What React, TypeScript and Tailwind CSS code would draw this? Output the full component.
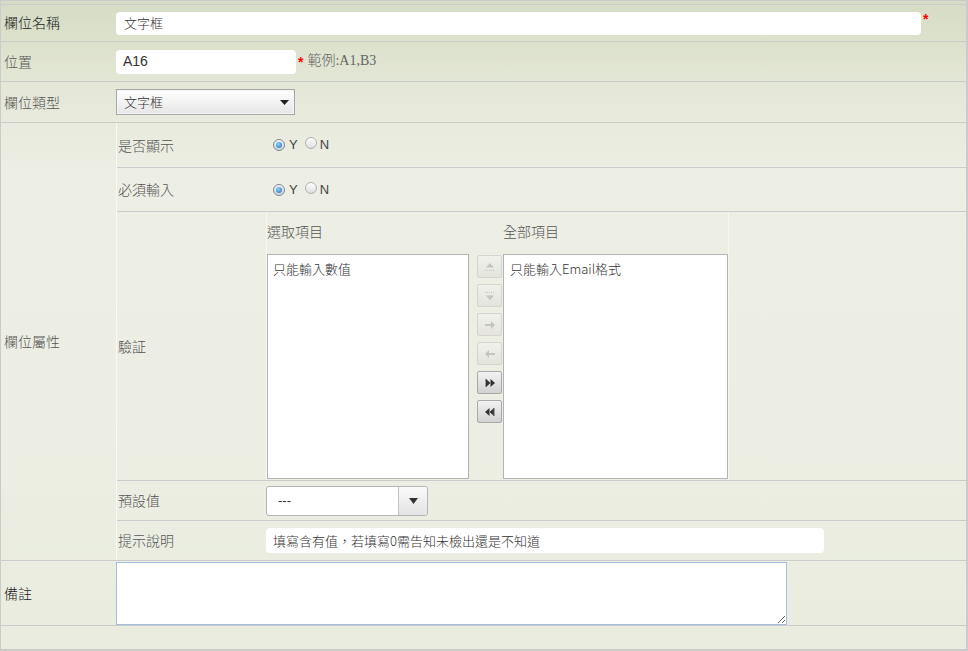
import type { ReactNode } from 'react'

const cjk = "font-['Noto_Sans_CJK_TC','Noto_Sans_CJK_SC',sans-serif]"

function Radio({ checked }: { checked?: boolean }) {
  return (
    <span
      className={
        'inline-flex h-[12px] w-[12px] items-center justify-center rounded-full border ' +
        (checked
          ? 'border-[#7d8a96] bg-[linear-gradient(#f4f4f4,#cfd3d6)]'
          : 'border-[#b0b0b0] bg-[linear-gradient(#ffffff,#dedede)]')
      }
    >
      {checked && (
        <span className="h-[6px] w-[6px] rounded-full bg-[radial-gradient(circle_at_40%_35%,#8fd0ff,#1b6fb8)]" />
      )}
    </span>
  )
}

function RadioYN() {
  return (
    <div className="ml-[7px] flex items-center font-['Liberation_Sans',sans-serif] text-[13px] text-[#444]">
      <Radio checked />
      <span className="ml-[4px]">Y</span>
      <span className="ml-[7px]">
        <Radio />
      </span>
      <span className="ml-[3px]">N</span>
    </div>
  )
}

function MoveBtn({ enabled, children }: { enabled?: boolean; children: ReactNode }) {
  return (
    <div
      className={
        'flex h-[23px] w-[25px] items-center justify-center rounded-[2px] border ' +
        (enabled
          ? 'border-[#a9a9a9] bg-[linear-gradient(#f2f2f2,#d2d2d2)]'
          : 'border-[#d6d6d0] bg-[linear-gradient(#f1f1ec,#e4e4dd)]')
      }
    >
      <svg width="14" height="12" viewBox="0 0 14 12">
        {children}
      </svg>
    </div>
  )
}

const faint = '#c4c4be'

function Transfer() {
  return (
    <div className="flex h-full w-[463px] flex-col border-l border-r border-[#f7f7f2]">
      <div className={'flex h-[42px] items-center pb-[4px] text-[14px] font-light text-[#555] ' + cjk}>
        <span className="w-[236px]">選取項目</span>
        <span>全部項目</span>
      </div>
      <div className="flex">
        <div className="h-[225px] w-[202px] border border-[#b3b3b3] bg-white px-[5px]">
          <span className={'text-[13px] font-light text-[#333] ' + cjk}>只能輸入數值</span>
        </div>
        <div className="flex w-[34px] flex-col gap-[6px] pl-[8px] pt-[1px]">
          <MoveBtn>
            <polygon points="3,6.5 7,2 11,6.5" fill={faint} />
            <line x1="2" y1="9.5" x2="12" y2="9.5" stroke={faint} strokeDasharray="1 1" />
          </MoveBtn>
          <MoveBtn>
            <line x1="2" y1="2.5" x2="12" y2="2.5" stroke={faint} strokeDasharray="1 1" />
            <polygon points="3,5.5 11,5.5 7,10" fill={faint} />
          </MoveBtn>
          <MoveBtn>
            <rect x="2" y="5" width="7" height="2" fill={faint} />
            <polygon points="8,2 12,6 8,10" fill={faint} />
          </MoveBtn>
          <MoveBtn>
            <rect x="5" y="5" width="7" height="2" fill={faint} />
            <polygon points="6,2 2,6 6,10" fill={faint} />
          </MoveBtn>
          <MoveBtn enabled>
            <rect x="2.5" y="2" width="1" height="8" fill="#555" />
            <polygon points="3,2 7.5,6 3,10" fill="#333" />
            <polygon points="7.5,2 12,6 7.5,10" fill="#333" />
          </MoveBtn>
          <MoveBtn enabled>
            <polygon points="6.5,2 2,6 6.5,10" fill="#333" />
            <polygon points="11,2 6.5,6 11,10" fill="#333" />
            <rect x="10.5" y="2" width="1" height="8" fill="#555" />
          </MoveBtn>
        </div>
        <div className="h-[225px] w-[225px] border border-[#b3b3b3] bg-white px-[6px]">
          <span className={'text-[13px] font-light text-[#333] ' + cjk}>只能輸入Email格式</span>
        </div>
      </div>
    </div>
  )
}

function SubRow({
  label,
  h,
  last,
  children,
}: {
  label: string
  h: string
  last?: boolean
  children?: ReactNode
}) {
  return (
    <div className={'flex ' + h + (last ? '' : ' border-b border-[#cbcbcb]')}>
      <div className={'flex w-[149px] items-center pl-[1px] text-[14px] font-light text-[#555] ' + cjk}>
        {label}
      </div>
      <div className="flex flex-1 items-center">{children}</div>
    </div>
  )
}

export default function App() {
  return (
    <div
      className={
        'flex h-[651px] w-[968px] flex-col border-t border-b-2 border-l border-r-2 border-[#cbcbcb] font-light ' +
        'bg-[linear-gradient(to_bottom,#d5dcc5_0px,#dde2cd_45px,#e6e9da_100px,#edeee4_170px,#eceee3_450px,#e9ecdf_100%)] ' +
        cjk
      }
    >
      <div className="h-[4px] shrink-0 border-b border-[#cbcbcb]" />

      {/* 欄位名稱 */}
      <div className="flex h-[37px] shrink-0 items-center border-b border-[#cbcbcb]">
        <div className="w-[115px] pb-[2px] pl-[3px] text-[14px] text-[#1a1a1a]">欄位名稱</div>
        <div className="flex h-[23px] w-[805px] items-center rounded-[4px] bg-white pl-[8px] text-[13px] text-[#333]">
          文字框
        </div>
        <span className="ml-[2px] self-start pt-[7px] font-['Liberation_Sans',sans-serif] text-[14px] font-bold leading-none text-[#f00]">
          *
        </span>
      </div>

      {/* 位置 */}
      <div className="flex h-[40px] shrink-0 items-center border-b border-[#cbcbcb]">
        <div className="w-[115px] pl-[3px] text-[14px] text-[#555]">位置</div>
        <div className="flex h-[24px] w-[180px] items-center rounded-[4px] bg-white pl-[7px] font-['Liberation_Sans',sans-serif] text-[14px] font-normal text-[#333]">
          A16
        </div>
        <span className="ml-[2px] self-start pt-[13px] font-['Liberation_Sans',sans-serif] text-[14px] font-bold leading-none text-[#f00]">
          *
        </span>
        <span className="ml-[4px] pb-[2px] font-['Liberation_Serif','Noto_Sans_CJK_TC',serif] text-[14px] text-[#666]">
          範例:A1,B3
        </span>
      </div>

      {/* 欄位類型 */}
      <div className="flex h-[41px] shrink-0 items-center border-b border-[#cbcbcb]">
        <div className="w-[115px] pl-[3px] text-[14px] text-[#555]">欄位類型</div>
        <div className="flex h-[26px] w-[179px] items-center justify-between border border-[#a7a7a7] bg-[linear-gradient(#ffffff,#e6e6e6)] pl-[7px] pr-[5px] text-[13px] text-[#333] shadow-[inset_0_0_0_1px_#f6f6f6]">
          文字框
          <svg width="9" height="5" viewBox="0 0 9 5">
            <polygon points="0,0 9,0 4.5,5" fill="#222" />
          </svg>
        </div>
      </div>

      {/* 欄位屬性 */}
      <div className="flex h-[438px] shrink-0 border-b border-[#cbcbcb]">
        <div className="flex w-[115px] items-center pl-[3px] text-[14px] text-[#555]">欄位屬性</div>
        <div className="flex flex-1 flex-col border-l border-[#f8f8f4]">
          <SubRow label="是否顯示" h="h-[45px]">
            <RadioYN />
          </SubRow>
          <SubRow label="必須輸入" h="h-[44px]">
            <RadioYN />
          </SubRow>
          <SubRow label="驗証" h="h-[269px]">
            <div className="h-full self-stretch">
              <Transfer />
            </div>
          </SubRow>
          <SubRow label="預設值" h="h-[40px]">
            <div className="flex h-[30px] w-[162px] items-center rounded-[3px] border border-[#b5b5b5] bg-white">
              <span className="flex-1 pl-[11px] font-['Liberation_Sans',sans-serif] text-[13px] text-[#333]">
                ---
              </span>
              <div className="flex h-full w-[29px] items-center justify-center rounded-r-[3px] border-l border-[#c3c3c3] bg-[linear-gradient(#fafafa,#e3e3e3)]">
                <svg width="9" height="6" viewBox="0 0 9 6">
                  <polygon points="0,0 9,0 4.5,6" fill="#333" />
                </svg>
              </div>
            </div>
          </SubRow>
          <SubRow label="提示說明" h="h-[39px]" last>
            <div className="flex h-[25px] w-[558px] items-center rounded-[4px] bg-white pl-[7px] text-[13px] text-[#333]">
              填寫含有值，若填寫0需告知未檢出還是不知道
            </div>
          </SubRow>
        </div>
      </div>

      {/* 備註 */}
      <div className="flex h-[65px] shrink-0 items-center border-b border-[#cbcbcb]">
        <div className="w-[115px] pl-[3px] text-[14px] text-[#1a1a1a]">備註</div>
        <textarea className="h-[63px] w-[671px] border border-[#a7bfdc] bg-white" />
      </div>

      <div className="flex-1" />
    </div>
  )
}
